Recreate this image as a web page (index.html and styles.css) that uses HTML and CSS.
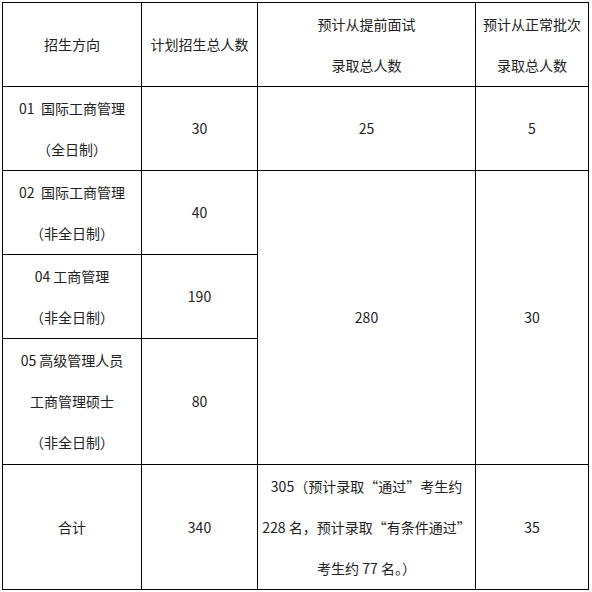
FILE: index.html
```html
<!DOCTYPE html>
<html lang="zh-CN">
<head>
<meta charset="utf-8">
<title>招生计划</title>
<link rel="stylesheet" href="styles.css">
</head>
<body>
<table class="plan">
  <colgroup>
    <col class="c1">
    <col class="c2">
    <col class="c3">
    <col class="c4">
  </colgroup>
  <tr class="r84">
    <td>招生方向</td>
    <td>计划招生总人数</td>
    <td>预计从提前面试<br>录取总人数</td>
    <td>预计从正常批次<br>录取总人数</td>
  </tr>
  <tr class="r84">
    <td>01&nbsp; 国际工商管理<br>（全日制）</td>
    <td>30</td>
    <td>25</td>
    <td>5</td>
  </tr>
  <tr class="r84">
    <td>02&nbsp; 国际工商管理<br>（非全日制）</td>
    <td>40</td>
    <td rowspan="3">280</td>
    <td rowspan="3">30</td>
  </tr>
  <tr class="r84">
    <td>04 工商管理<br>（非全日制）</td>
    <td>190</td>
  </tr>
  <tr class="r126">
    <td>05 高级管理人员<br>工商管理硕士<br>（非全日制）</td>
    <td>80</td>
  </tr>
  <tr class="r125">
    <td>合计</td>
    <td>340</td>
    <td>305（预计录取“通过”考生约<br>228 名，预计录取“有条件通过”<br>考生约 77 名。）</td>
    <td>35</td>
  </tr>
</table>
</body>
</html>
```

FILE: styles.css
```css
html, body {
  margin: 0;
  padding: 0;
  background: #ffffff;
}

.plan {
  margin: 2px 0 0 2px;
  border-collapse: collapse;
  table-layout: fixed;
  width: 586px;
  font-family: "Noto Sans CJK SC", "Noto Sans", sans-serif;
  font-size: 14px;
  color: #222222;
}

.c1 { width: 139px; }
.c2 { width: 116px; }
.c3 { width: 218px; }
.c4 { width: 113px; }

.plan td {
  border: 1px solid #000000;
  padding: 0;
  text-align: center;
  vertical-align: middle;
  line-height: 41px;
  white-space: nowrap;
}

.r84 { height: 84px; }
.r126 { height: 126px; }
.r125 { height: 125px; }
```
